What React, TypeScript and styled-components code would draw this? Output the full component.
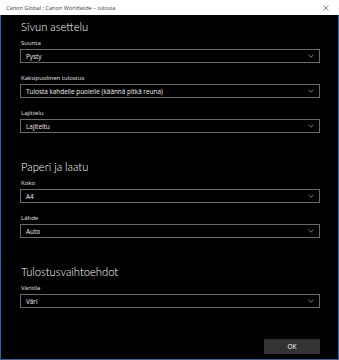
import React from 'react';
import styled, { createGlobalStyle } from 'styled-components';

const GlobalStyle = createGlobalStyle`
  html, body {
    margin: 0;
    padding: 0;
    background: #000;
  }
  * {
    box-sizing: border-box;
  }
`;

const Window = styled.div`
  width: 339px;
  height: 360px;
  display: flex;
  flex-direction: column;
  background: #000;
  border: 1px solid #2a64ad;
  border-top: none;
  font-family: "Open Sans", "Noto Sans", sans-serif;
  color: #fff;
`;

const TitleBar = styled.div`
  height: 15px;
  flex-shrink: 0;
  display: flex;
  align-items: center;
  justify-content: space-between;
  padding: 0 8px 0 6px;
  background: #fff;
  color: #3a3a3a;
  font-size: 5.6px;
  margin: 0 -1px;
`;

const CloseIcon = styled.svg`
  width: 6px;
  height: 6px;
  margin-right: 2px;
`;

const Content = styled.div`
  flex: 1;
  display: flex;
  flex-direction: column;
  gap: 26px;
  padding: 4px 18px 5px 19px;
`;

const Section = styled.section`
  display: flex;
  flex-direction: column;
`;

const Heading = styled.h2`
  margin: 0 0 4px;
  padding-left: 1px;
  font-family: Lato, "Open Sans", sans-serif;
  font-size: 11.2px;
  line-height: 16px;
  font-weight: 300;
  color: #fff;
`;

const Fields = styled.div`
  display: flex;
  flex-direction: column;
  gap: 11px;
`;

const Field = styled.div`
  display: flex;
  flex-direction: column;
  gap: 1px;
`;

const Label = styled.label`
  padding-left: 1px;
  font-size: 6px;
  line-height: 9px;
  color: #e8e8e8;
`;

const Select = styled.div`
  height: 14px;
  display: flex;
  align-items: center;
  justify-content: space-between;
  padding: 0 5px 0 5px;
  border: 1px solid #6a6a6a;
  background: #000;
  font-size: 6.4px;
  color: #f0f0f0;
`;

const Chevron = styled.svg`
  width: 6px;
  height: 4px;
`;

const Footer = styled.div`
  margin-top: auto;
  display: flex;
  justify-content: flex-end;
`;

const OkButton = styled.button`
  width: 56px;
  height: 15px;
  border: none;
  padding: 0;
  background: #333;
  color: #fff;
  font-family: inherit;
  font-size: 6.5px;
`;

const Dropdown: React.FC<{ label: string; value: string }> = ({ label, value }) => (
  <Field>
    <Label>{label}</Label>
    <Select>
      <span>{value}</span>
      <Chevron viewBox="0 0 6 4">
        <path d="M0.5 0.8 L3 3.2 L5.5 0.8" fill="none" stroke="#9a9a9a" strokeWidth="0.8" />
      </Chevron>
    </Select>
  </Field>
);

const sections = [
  {
    title: 'Sivun asettelu',
    fields: [
      { label: 'Suunta', value: 'Pysty' },
      { label: 'Kaksipuolinen tulostus', value: 'Tulosta kahdelle puolelle (käännä pitkä reuna)' },
      { label: 'Lajittelu', value: 'Lajiteltu' },
    ],
  },
  {
    title: 'Paperi ja laatu',
    fields: [
      { label: 'Koko', value: 'A4' },
      { label: 'Lähde', value: 'Auto' },
    ],
  },
  {
    title: 'Tulostusvaihtoehdot',
    fields: [{ label: 'Väritila', value: 'Väri' }],
  },
];

export default function App() {
  return (
    <>
      <GlobalStyle />
      <Window>
        <TitleBar>
          <span>Canon Global : Canon Worldwide – tulosta</span>
          <CloseIcon viewBox="0 0 6 6">
            <path d="M0.5 0.5 L5.5 5.5 M5.5 0.5 L0.5 5.5" stroke="#555" strokeWidth="0.7" />
          </CloseIcon>
        </TitleBar>
        <Content>
          {sections.map((s) => (
            <Section key={s.title}>
              <Heading>{s.title}</Heading>
              <Fields>
                {s.fields.map((f) => (
                  <Dropdown key={f.label} label={f.label} value={f.value} />
                ))}
              </Fields>
            </Section>
          ))}
          <Footer>
            <OkButton>OK</OkButton>
          </Footer>
        </Content>
      </Window>
    </>
  );
}
